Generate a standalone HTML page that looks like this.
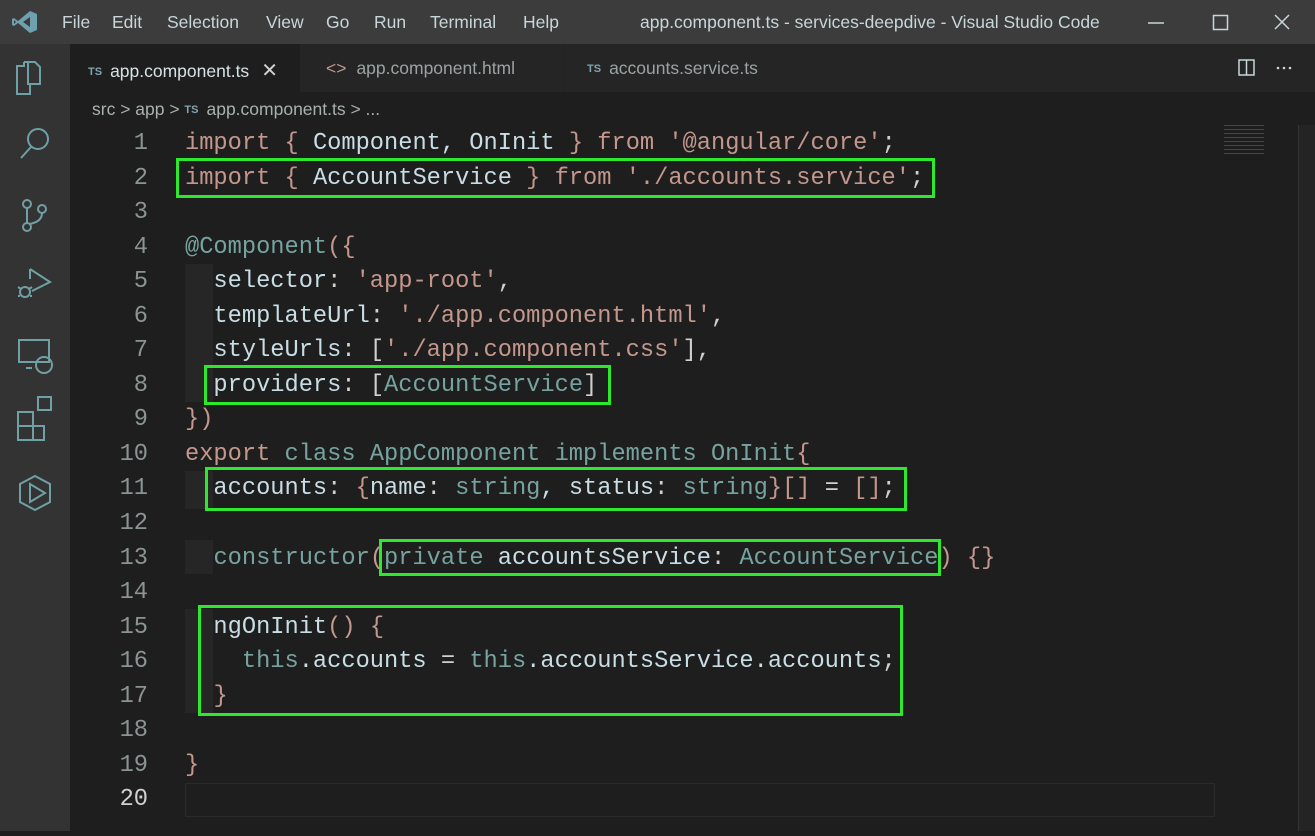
<!DOCTYPE html>
<html><head><meta charset="utf-8"><style>
*{margin:0;padding:0;box-sizing:border-box}
body{width:1315px;height:831px;background:#1e1e1e;overflow:hidden;position:relative;font-family:"Liberation Sans",sans-serif}
.title{position:absolute;left:0;top:0;width:1315px;height:44px;background:#3c3c3c;color:#c8d6da;font-size:17.5px}
.title span{position:absolute;top:12px}
.act{position:absolute;left:0;top:44px;width:70px;height:787px;background:#333333}
.tabs{position:absolute;left:70px;top:44px;width:1245px;height:48px;background:#252526}
.tab{position:absolute;top:0;height:48px;font-size:17.5px;color:#9aa3a3;padding-top:14px}
.ts{font-size:11px;font-weight:bold;color:#7fa5b0;margin-right:8px;vertical-align:2px}
.bc{position:absolute;left:92px;top:99px;font-size:17.5px;color:#a9b0b0}
.code{position:absolute;left:0;top:127px;font-family:"Liberation Mono",monospace;font-size:23.7px;line-height:34.55px;white-space:pre}
.ln{position:absolute;left:100px;width:48px;text-align:right;color:#8a9494}
.tx{position:absolute;left:185px;color:#c8dde4}
.k{color:#c4978d}.t{color:#76a3a0}.s{color:#c4978d}.p{color:#d0d0d0}.b{color:#c4978d}
.box{position:absolute;border:3px solid #2ee82e}
.guide{position:absolute;width:28px;background:#262626}
</style></head><body>
<div class="title">
<svg style="position:absolute;left:12px;top:10px" width="26" height="24" viewBox="0 0 26 24"><path d="M18 1 L25 4 V20 L18 23 L6 13 L2 16 L0 15 V9 L2 8 L6 11 Z M18 7 L11 12 L18 17 Z M2 10 V14 L4 12 Z" fill="#6fa0b0"/></svg>
<span style="left:62px">File</span><span style="left:112px">Edit</span><span style="left:167px">Selection</span><span style="left:266px">View</span><span style="left:326px">Go</span><span style="left:374px">Run</span><span style="left:430px">Terminal</span><span style="left:523px">Help</span>
<span style="left:640px">app.component.ts - services-deepdive - Visual Studio Code</span>
<svg style="position:absolute;left:1148px;top:12px" width="160" height="22"><line x1="0" y1="11" x2="16" y2="11" stroke="#c8d6da" stroke-width="1.5"/><rect x="65.5" y="3.5" width="14" height="14" fill="none" stroke="#c8d6da" stroke-width="1.5"/><path d="M127 3 L141 17 M141 3 L127 17" stroke="#c8d6da" stroke-width="1.5"/></svg>
</div>
<div class="act">
<svg width="70" height="787" fill="none" stroke="#6fa0a6" stroke-width="2">
<path d="M24 18 H35 L40 23 V40 H28 V18 M24 18 V22 H17 V50 H30 V40"/>
<circle cx="38" cy="95" r="10"/><path d="M31 103 L21 114"/>
<circle cx="27" cy="160" r="4"/><circle cx="27" cy="183" r="4"/><circle cx="42" cy="165" r="4"/><path d="M27 164 V179 M42 169 Q42 178 29 180"/>
<path d="M30 225 L50 238 L32 247 M30 225 V235"/><circle cx="25" cy="248" r="5"/><path d="M18 243 L21 245 M18 252 H20 M32 243 L29 245 M32 252 H30"/>
<rect x="19" y="296" width="30" height="22"/><path d="M26 324 H32"/><circle cx="44" cy="321" r="8"/>
<rect x="18" y="368" width="15" height="14"/><rect x="18" y="382" width="15" height="14"/><rect x="33" y="382" width="11" height="14"/><rect x="38" y="353" width="13" height="13"/>
<path d="M35 432 L50 440 V458 L35 466 L20 458 V440 Z M30 440 L45 449 L30 458 Z"/>
</svg>
</div>
<div class="tabs">
<div class="tab" style="left:0;width:230px;background:#1e1e1e;color:#d6e2e4;padding-left:18px"><span class="ts">TS</span>app.component.ts<span style="margin-left:12px;font-size:20px;color:#d0d0d0">✕</span></div>
<div class="tab" style="left:230px;width:264px;padding-left:26px"><span style="color:#c4978d;margin-right:10px">&lt;&gt;</span>app.component.html</div>
<div class="tab" style="left:494px;width:214px;padding-left:22px;border-left:1px solid #222"><span class="ts">TS</span>accounts.service.ts</div>
<svg style="position:absolute;left:1168px;top:15px" width="60" height="18"><rect x="1" y="1" width="15" height="15" fill="none" stroke="#c8d6da" stroke-width="1.5"/><line x1="8.5" y1="1" x2="8.5" y2="16" stroke="#c8d6da" stroke-width="1.5"/><circle cx="40" cy="9" r="1.3" fill="#c8d6da"/><circle cx="46" cy="9" r="1.3" fill="#c8d6da"/><circle cx="52" cy="9" r="1.3" fill="#c8d6da"/></svg>
</div>
<div class="bc">src &gt; app &gt; <span class="ts">TS</span>app.component.ts &gt; ...</div>
<div style="position:absolute;left:1224px;top:125px;width:40px;height:30px;opacity:.35;background:repeating-linear-gradient(#7a9a9e 0 1px,transparent 1px 4px)"></div>
<div style="position:absolute;left:1298px;top:125px;width:17px;height:706px;background:#242424;border-left:1px solid #333"></div>
<div style="position:absolute;left:185px;top:783px;width:1030px;height:34px;border:1px solid #2a2a2a"></div>
<div class="guide" style="left:185px;top:264px;height:138px"></div>
<div class="guide" style="left:185px;top:471px;height:38px"></div>
<div class="guide" style="left:185px;top:540px;height:34px"></div>
<div class="guide" style="left:185px;top:609px;height:104px"></div>
<div class="code">
<div class="ln" style="top:0">1
2
3
4
5
6
7
8
9
10
11
12
13
14
15
16
17
18
19
<span style="color:#d0d0d0">20</span></div>
<div class="tx" style="top:0"><span class="k">import</span> <span class="b">{</span> Component, OnInit <span class="b">}</span> <span class="k">from</span> <span class="s">'@angular/core'</span><span class="p">;</span>
<span class="k">import</span> <span class="b">{</span> AccountService <span class="b">}</span> <span class="k">from</span> <span class="s">'./accounts.service'</span><span class="p">;</span>

<span class="t">@Component</span><span class="b">({</span>
  selector<span class="p">:</span> <span class="s">'app-root'</span><span class="p">,</span>
  templateUrl<span class="p">:</span> <span class="s">'./app.component.html'</span><span class="p">,</span>
  styleUrls<span class="p">:</span> <span class="p">[</span><span class="s">'./app.component.css'</span><span class="p">],</span>
  providers<span class="p">:</span> <span class="p">[</span><span class="t">AccountService</span><span class="p">]</span>
<span class="b">})</span>
<span class="k">export</span> <span class="t">class AppComponent implements OnInit</span><span class="b">{</span>
  accounts<span class="p">:</span> <span class="b">{</span>name<span class="p">:</span> <span class="t">string</span>, status<span class="p">:</span> <span class="t">string</span><span class="b">}[]</span> <span class="p">=</span> <span class="b">[]</span><span class="p">;</span>

  <span class="t">constructor</span><span class="b">(</span><span class="t">private</span> accountsService<span class="p">:</span> <span class="t">AccountService</span><span class="b">)</span> <span class="b">{}</span>

  ngOnInit<span class="b">()</span> <span class="b">{</span>
    <span class="t">this</span>.accounts <span class="p">=</span> <span class="t">this</span>.accountsService.accounts<span class="p">;</span>
  <span class="b">}</span>

<span class="b">}</span>
</div>
</div>
<div class="box" style="left:176px;top:158px;width:759px;height:40px"></div>
<div class="box" style="left:204px;top:365px;width:407px;height:40px"></div>
<div class="box" style="left:205px;top:467px;width:702px;height:44px"></div>
<div class="box" style="left:379px;top:539px;width:562px;height:37px"></div>
<div class="box" style="left:198px;top:605px;width:705px;height:111px"></div>
</body></html>
